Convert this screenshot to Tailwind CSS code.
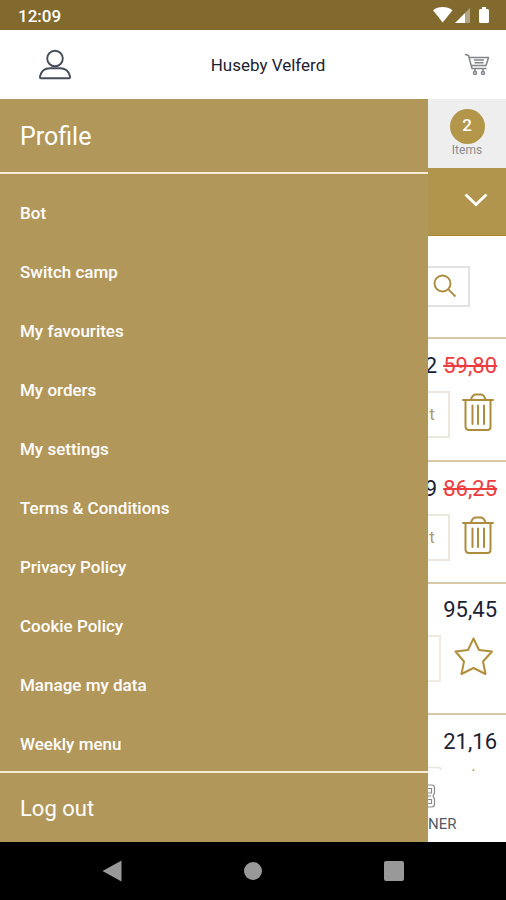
<!DOCTYPE html>
<html lang="en">
<head>
<meta charset="utf-8">
<meta name="viewport" content="width=device-width, initial-scale=1">
<title>Huseby Velferd</title>
<script src="https://cdn.jsdelivr.net/npm/@tailwindcss/browser@4"></script>
</head>
<body class="flex h-screen flex-col overflow-hidden bg-white font-['Roboto',sans-serif] text-[#1c2233]">

<!-- Status bar -->
<div class="flex h-[30px] shrink-0 items-center justify-between bg-[#826a2f] pl-[18px] pr-4 text-white">
  <span class="pt-[2px] text-[17px] font-medium leading-5">12:09</span>
  <svg class="h-[18px] w-[58px]" viewBox="0 0 58 18" fill="#fff" aria-hidden="true">
    <path d="M1 4.2C6.5-.2 15-.2 20.500 4.200L10.700 16.500Z"/>
    <path d="M23 17 33 7V17Z"/><path d="M33 7 38 2V17H33Z" opacity=".4"/>
    <path d="M50 1h4v2h1.500q1.500 0 1.500 1.500v11q0 1.500-1.500 1.500h-7q-1.500 0-1.500-1.500v-11q0-1.500 1.500-1.500H50Z"/>
  </svg>
</div>

<!-- App header -->
<header class="flex h-[69px] shrink-0 items-center justify-between pl-[38px] pr-4">
  <button type="button" aria-label="Profile" class="w-[34px]">
    <svg class="h-[32px] w-[34px]" viewBox="0 0 34 32" fill="none" stroke="#454c59" stroke-width="1.900">
      <circle cx="17" cy="9.500" r="7.800"/>
      <path d="M3.200 29.200C2 29.200 1.700 28.500 2 27.300C3.200 22 7 19.300 12 19.300H22C27 19.300 30.800 22 32 27.300C32.300 28.500 32 29.200 30.800 29.200Z"/>
    </svg>
  </button>
  <h1 class="text-[17px] leading-6">Huseby Velferd</h1>
  <button type="button" aria-label="Cart" class="w-[26px]">
    <svg class="h-[24px] w-[26px]" viewBox="0 0 26 24" fill="none" stroke="#80858c" stroke-width="1.500" stroke-linecap="round" stroke-linejoin="round">
      <path d="M1.500 1.500 4.500 2.500 8 15.500H22M5.200 4.500H24.500L22 12.500H7.300"/>
      <path d="M10.500 7H19.500M11 9.700H19"/>
      <circle cx="11" cy="20" r="1.500"/><circle cx="19" cy="20" r="1.500"/>
      <path d="M11 16V18M19 16V18"/>
    </svg>
  </button>
</header>

<div class="flex min-h-0 flex-1">
  <!-- Profile drawer -->
  <nav class="flex min-w-0 flex-1 flex-col bg-[#b2975a] text-white" aria-label="Profile menu">
    <h2 class="flex h-[75px] shrink-0 items-center border-b-2 border-[#f7ebd4] px-5 pt-[2px] text-[25px] leading-8">Profile</h2>
    <ul class="min-h-0 flex-1 overflow-hidden pt-[10px] text-[17px] font-medium">
      <li><a href="#" class="flex h-[59px] items-center px-5">Bot</a></li>
      <li><a href="#" class="flex h-[59px] items-center px-5">Switch camp</a></li>
      <li><a href="#" class="flex h-[59px] items-center px-5">My favourites</a></li>
      <li><a href="#" class="flex h-[59px] items-center px-5">My orders</a></li>
      <li><a href="#" class="flex h-[59px] items-center px-5">My settings</a></li>
      <li><a href="#" class="flex h-[59px] items-center px-5">Terms &amp; Conditions</a></li>
      <li><a href="#" class="flex h-[59px] items-center px-5">Privacy Policy</a></li>
      <li><a href="#" class="flex h-[59px] items-center px-5">Cookie Policy</a></li>
      <li><a href="#" class="flex h-[59px] items-center px-5">Manage my data</a></li>
      <li><a href="#" class="flex h-[59px] items-center px-5">Weekly menu</a></li>
    </ul>
    <button type="button" class="h-[71px] shrink-0 border-t-2 border-[#f7ebd4] px-5 pt-[2px] text-left text-[22px] leading-8">Log out</button>
  </nav>

  <!-- Visible edge of the order list -->
  <main class="flex w-[78px] shrink-0 flex-col overflow-hidden bg-white">
    <div class="flex h-[69px] shrink-0 flex-col items-center bg-[#eee] pt-[10px]">
      <span class="flex size-[35px] items-center justify-center rounded-full bg-[#b4964a] pb-[2px] text-[17px] font-medium text-white">2</span>
      <span class="text-[12px] leading-[13px] text-[#8b8b8b]">Items</span>
    </div>
    <button type="button" aria-label="Expand" class="flex h-[68px] shrink-0 items-center justify-end border-b border-[#a8872f] bg-[#b1954c] pb-1 pr-[18px]">
      <svg class="h-[14px] w-[24px]" viewBox="0 0 24 14" fill="none" stroke="#fff" stroke-width="2.800"><path d="M1.500 1.500 12 11.500 22.500 1.500"/></svg>
    </button>
    <div class="flex h-[101px] shrink-0 items-center">
      <button type="button" aria-label="Search" class="flex h-[41px] w-[42px] items-center justify-center border-2 border-l-0 border-[#e2e2e2] pb-[2px] pr-[6px]">
        <svg class="size-6" viewBox="0 0 24 24" fill="none" stroke="#ab8c3c" stroke-width="1.900"><circle cx="9.500" cy="9.500" r="8"/><path d="M15.300 15.300 22.500 22.500"/></svg>
      </button>
    </div>

    <section class="flex h-[123px] shrink-0 flex-col border-t-2 border-[#d9c8a6] pt-[14px]">
      <p class="flex justify-end gap-[6px] pr-[9px] text-[22px] leading-[26px]"><span>2</span><s class="text-[#ee3b3e] decoration-2">59,80</s></p>
      <div class="flex items-start justify-between pt-[12px] pr-3">
        <button type="button" class="h-[47px] w-[22px] border-2 border-l-0 border-[#ece7dc] pr-3 text-[17px] text-[#b09a68]">t</button>
        <button type="button" aria-label="Remove" class="w-8 pt-[2px]">
          <svg class="h-[38px] w-8" viewBox="0 0 32 38" fill="none" stroke="#ad8d3d" stroke-width="2" stroke-linecap="round" stroke-linejoin="round">
            <path d="M1 7H31M3.500 7V33Q3.500 37 7 37H25.500Q28.500 37 28.500 34V7M9 6.500C10 3 11.500 1.500 14 1.500H18.500C21 1.500 22.500 3 23.500 6.500"/><path d="M10.500 12.500V31M16 12.500V31M22 12.500V31"/>
          </svg>
        </button>
      </div>
    </section>

    <section class="flex h-[122px] shrink-0 flex-col border-t-2 border-[#d9c8a6] pt-[14px]">
      <p class="flex justify-end gap-[6px] pr-[9px] text-[22px] leading-[26px]"><span>9</span><s class="text-[#ee3b3e] decoration-2">86,25</s></p>
      <div class="flex items-start justify-between pt-[12px] pr-3">
        <button type="button" class="h-[47px] w-[22px] border-2 border-l-0 border-[#ece7dc] pr-3 text-[17px] text-[#b09a68]">t</button>
        <button type="button" aria-label="Remove" class="w-8 pt-[2px]">
          <svg class="h-[38px] w-8" viewBox="0 0 32 38" fill="none" stroke="#ad8d3d" stroke-width="2" stroke-linecap="round" stroke-linejoin="round">
            <path d="M1 7H31M3.500 7V33Q3.500 37 7 37H25.500Q28.500 37 28.500 34V7M9 6.500C10 3 11.500 1.500 14 1.500H18.500C21 1.500 22.500 3 23.500 6.500"/><path d="M10.500 12.500V31M16 12.500V31M22 12.500V31"/>
          </svg>
        </button>
      </div>
    </section>

    <section class="flex h-[131px] shrink-0 flex-col border-t-2 border-[#d9c8a6] pt-[13px]">
      <p class="pr-[9px] text-right text-[22px] leading-[26px]">95,45</p>
      <div class="flex items-start justify-between pt-[12px] pr-3">
        <button type="button" aria-label="Quantity" class="h-[47px] w-[13px] border-2 border-l-0 border-[#f0ebe2]"></button>
        <button type="button" aria-label="Add to favourites" class="w-10 pt-[2px]">
          <svg class="h-[39px] w-10" viewBox="0 0 40 39" fill="none" stroke="#b08f3a" stroke-width="2" stroke-linejoin="round"><path d="M19.500 1.500 25 13 38 14.500 29 24.500 31.500 37 19.500 31 7.500 37 10 24.500 1.500 14.500 14 13Z"/></svg>
        </button>
      </div>
    </section>

    <section class="min-h-0 flex-1 overflow-hidden border-t-2 border-[#d9c8a6] pt-[14px]">
      <p class="pr-[9px] text-right text-[22px] leading-[26px]">21,16</p>
      <svg class="mt-[11px] h-[6px] w-[78px]" viewBox="0 0 78 6" fill="none" aria-hidden="true"><path d="M0 1.500H10Q13 1.500 13 4" stroke="#e9e5dc" stroke-width="1.500"/><path d="M44 5 45.500 2.500 47 5Z" fill="#c5aa62"/></svg>
    </section>
    <a href="#" class="flex h-[70px] shrink-0 flex-col bg-white pt-[11px]">
      <svg class="h-[26px] w-[8px]" viewBox="0 0 8 26" fill="none" stroke="#8b8b8b" stroke-width="1.200" aria-hidden="true"><path d="M0 2H3.500Q6.500 2 6.500 5V10L5 13 6.500 16V21Q6.500 24 3.500 24H0M0 5.500H3.500V10H0M0 13H3M0 16.500H3.500V20.500H0"/></svg>
      <span class="pt-[5px] text-[15px] leading-5 text-[#555b66]">NER</span>
    </a>
  </main>
</div>

<!-- System navigation -->
<footer class="flex h-[58px] shrink-0 items-center justify-between bg-black px-[102px]">
  <button type="button" aria-label="Back" class="w-5"><svg class="h-[22px] w-5" viewBox="0 0 20 22" fill="#999"><path d="M.5 11 19.500.5V21.500Z"/></svg></button>
  <button type="button" aria-label="Home" class="size-[18px] rounded-full bg-[#999]"></button>
  <button type="button" aria-label="Recents" class="size-5 rounded-[2px] bg-[#999]"></button>
</footer>
</body>
</html>
